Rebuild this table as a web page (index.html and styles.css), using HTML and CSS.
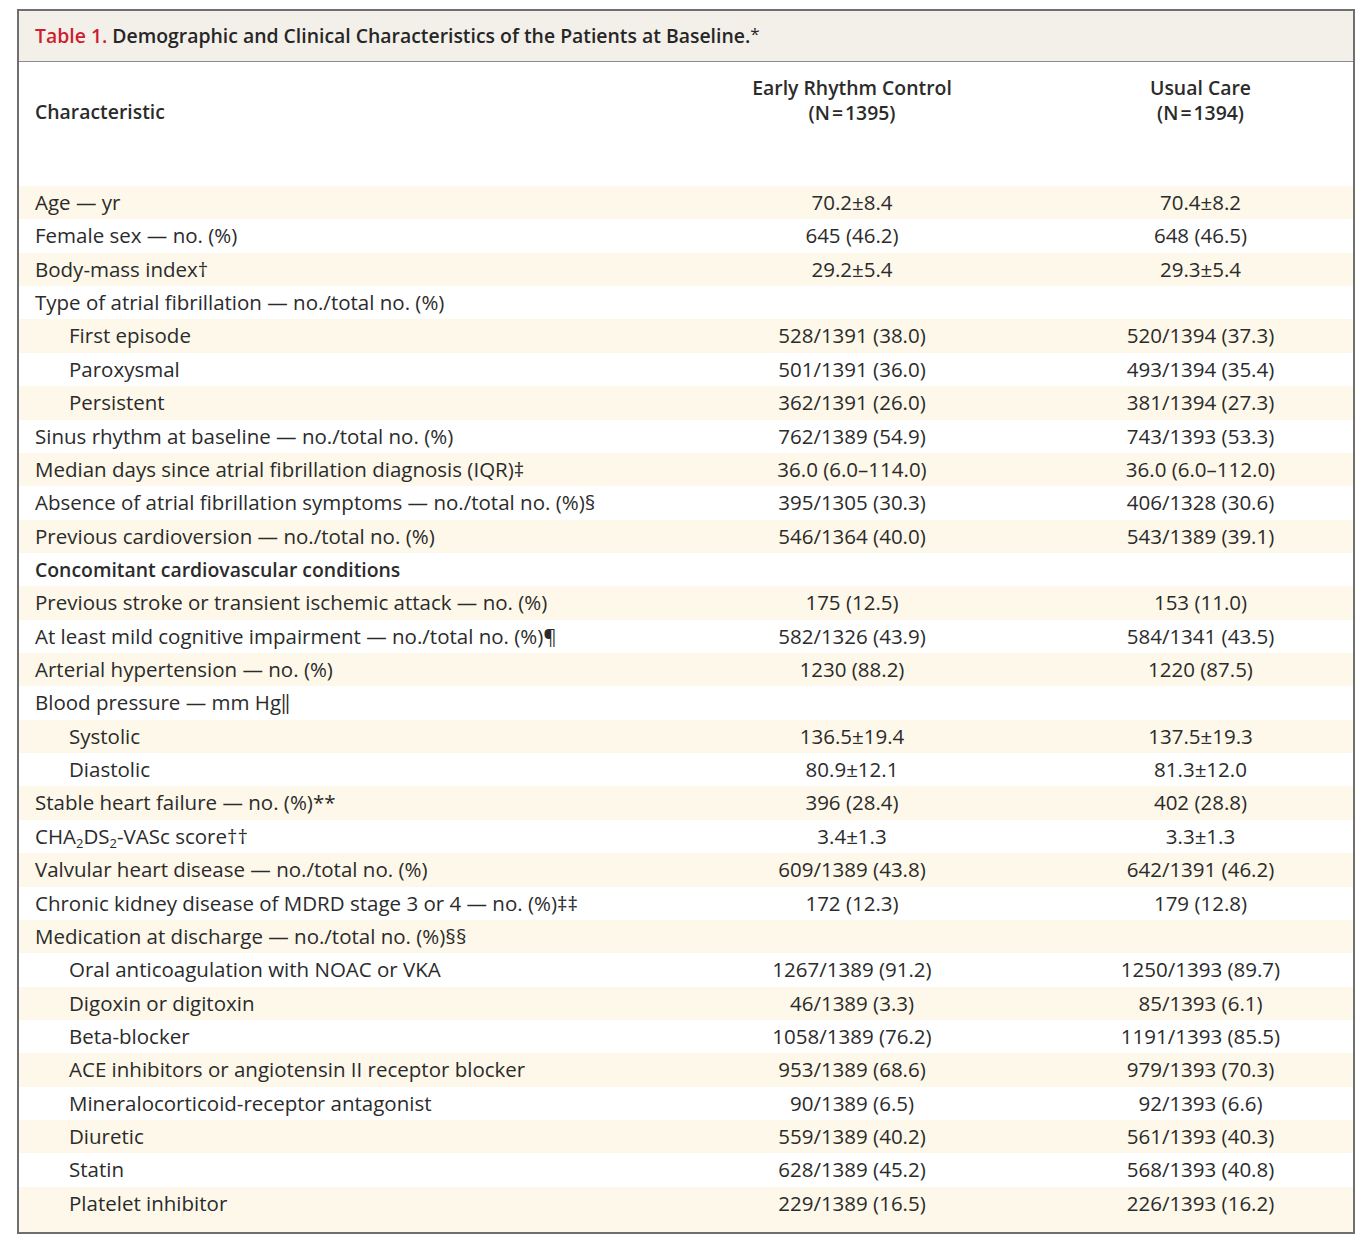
FILE: index.html
```html
<!DOCTYPE html>
<html lang="en">
<head>
<meta charset="utf-8">
<title>Table 1</title>
<link rel="stylesheet" href="styles.css">
</head>
<body>
<div class="table-box">
  <div class="title-bar"><span class="tnum">Table 1.</span> Demographic and Clinical Characteristics of the Patients at Baseline.<span class="fn">*</span></div>
  <div class="head">
    <div class="h-char">Characteristic</div>
    <div class="h-col">Early Rhythm Control<br>(N<span class="eq">=</span>1395)</div>
    <div class="h-col">Usual Care<br>(N<span class="eq">=</span>1394)</div>
  </div>
  <div class="rows">
    <div class="row s"><div class="c0">Age — yr</div><div class="c">70.2±8.4</div><div class="c">70.4±8.2</div></div>
    <div class="row"><div class="c0">Female sex — no. (%)</div><div class="c">645 (46.2)</div><div class="c">648 (46.5)</div></div>
    <div class="row s"><div class="c0">Body-mass index†</div><div class="c">29.2±5.4</div><div class="c">29.3±5.4</div></div>
    <div class="row"><div class="c0">Type of atrial fibrillation — no./total no. (%)</div><div class="c"></div><div class="c"></div></div>
    <div class="row s"><div class="c0 ind">First episode</div><div class="c">528/1391 (38.0)</div><div class="c">520/1394 (37.3)</div></div>
    <div class="row"><div class="c0 ind">Paroxysmal</div><div class="c">501/1391 (36.0)</div><div class="c">493/1394 (35.4)</div></div>
    <div class="row s"><div class="c0 ind">Persistent</div><div class="c">362/1391 (26.0)</div><div class="c">381/1394 (27.3)</div></div>
    <div class="row"><div class="c0">Sinus rhythm at baseline — no./total no. (%)</div><div class="c">762/1389 (54.9)</div><div class="c">743/1393 (53.3)</div></div>
    <div class="row s"><div class="c0">Median days since atrial fibrillation diagnosis (IQR)‡</div><div class="c">36.0 (6.0–114.0)</div><div class="c">36.0 (6.0–112.0)</div></div>
    <div class="row"><div class="c0">Absence of atrial fibrillation symptoms — no./total no. (%)§</div><div class="c">395/1305 (30.3)</div><div class="c">406/1328 (30.6)</div></div>
    <div class="row s"><div class="c0">Previous cardioversion — no./total no. (%)</div><div class="c">546/1364 (40.0)</div><div class="c">543/1389 (39.1)</div></div>
    <div class="row"><div class="c0 bold">Concomitant cardiovascular conditions</div><div class="c"></div><div class="c"></div></div>
    <div class="row s"><div class="c0">Previous stroke or transient ischemic attack — no. (%)</div><div class="c">175 (12.5)</div><div class="c">153 (11.0)</div></div>
    <div class="row"><div class="c0">At least mild cognitive impairment — no./total no. (%)¶</div><div class="c">582/1326 (43.9)</div><div class="c">584/1341 (43.5)</div></div>
    <div class="row s"><div class="c0">Arterial hypertension — no. (%)</div><div class="c">1230 (88.2)</div><div class="c">1220 (87.5)</div></div>
    <div class="row"><div class="c0">Blood pressure — mm Hg‖</div><div class="c"></div><div class="c"></div></div>
    <div class="row s"><div class="c0 ind">Systolic</div><div class="c">136.5±19.4</div><div class="c">137.5±19.3</div></div>
    <div class="row"><div class="c0 ind">Diastolic</div><div class="c">80.9±12.1</div><div class="c">81.3±12.0</div></div>
    <div class="row s"><div class="c0">Stable heart failure — no. (%)**</div><div class="c">396 (28.4)</div><div class="c">402 (28.8)</div></div>
    <div class="row"><div class="c0">CHA<sub>2</sub>DS<sub>2</sub>-VASc score††</div><div class="c">3.4±1.3</div><div class="c">3.3±1.3</div></div>
    <div class="row s"><div class="c0">Valvular heart disease — no./total no. (%)</div><div class="c">609/1389 (43.8)</div><div class="c">642/1391 (46.2)</div></div>
    <div class="row"><div class="c0">Chronic kidney disease of MDRD stage 3 or 4 — no. (%)‡‡</div><div class="c">172 (12.3)</div><div class="c">179 (12.8)</div></div>
    <div class="row s"><div class="c0">Medication at discharge — no./total no. (%)§§</div><div class="c"></div><div class="c"></div></div>
    <div class="row"><div class="c0 ind">Oral anticoagulation with NOAC or VKA</div><div class="c">1267/1389 (91.2)</div><div class="c">1250/1393 (89.7)</div></div>
    <div class="row s"><div class="c0 ind">Digoxin or digitoxin</div><div class="c">46/1389 (3.3)</div><div class="c">85/1393 (6.1)</div></div>
    <div class="row"><div class="c0 ind">Beta-blocker</div><div class="c">1058/1389 (76.2)</div><div class="c">1191/1393 (85.5)</div></div>
    <div class="row s"><div class="c0 ind">ACE inhibitors or angiotensin II receptor blocker</div><div class="c">953/1389 (68.6)</div><div class="c">979/1393 (70.3)</div></div>
    <div class="row"><div class="c0 ind">Mineralocorticoid-receptor antagonist</div><div class="c">90/1389 (6.5)</div><div class="c">92/1393 (6.6)</div></div>
    <div class="row s"><div class="c0 ind">Diuretic</div><div class="c">559/1389 (40.2)</div><div class="c">561/1393 (40.3)</div></div>
    <div class="row"><div class="c0 ind">Statin</div><div class="c">628/1389 (45.2)</div><div class="c">568/1393 (40.8)</div></div>
    <div class="row s last"><div class="c0 ind">Platelet inhibitor</div><div class="c">229/1389 (16.5)</div><div class="c">226/1393 (16.2)</div></div>
  </div>
</div>
</body>
</html>
```
FILE: styles.css
```css
html, body {
  margin: 0;
  padding: 0;
  background: #ffffff;
}
body {
  font-family: "Open Sans", Lato, "Liberation Sans", sans-serif;
  color: #2b2b2b;
  font-size: 20.5px;
}
.table-box {
  margin: 9px 0 0 17px;
  width: 1334px;
  border: 2px solid #6f6f6f;
}
.title-bar {
  height: 46px;
  line-height: 46px;
  padding-bottom: 4px;
  background: #f3f0ea;
  border-bottom: 1px solid #8c8c8c;
  padding-left: 16px;
  font-weight: 600;
  font-size: 19.4px;
  color: #262626;
  white-space: nowrap;
}
.tnum {
  color: #cc1f30;
}
.fn {
  font-size: 17px;
  vertical-align: 3px;
  font-weight: 400;
}
.head {
  display: grid;
  grid-template-columns: 637px 392px 305px;
  height: 124px;
  font-weight: 600;
  line-height: 25px;
  font-size: 19.4px;
}
.h-char {
  padding: 37px 0 0 16px;
}
.h-col {
  padding-top: 13px;
  text-align: center;
}
.eq {
  padding: 0 2px;
}
.rows {
  display: flex;
  flex-direction: column;
}
.row {
  display: grid;
  grid-template-columns: 637px 392px 305px;
  height: 33.37px;
  line-height: 33.37px;
  white-space: nowrap;
}
.row.s {
  background: #fdf8e9;
}
.row.last {
  height: 45px;
}
.c0 {
  padding-left: 16px;
}
.c0.ind {
  padding-left: 50px;
}
.c0.bold {
  font-weight: 600;
  font-size: 19.4px;
}
.c {
  text-align: center;
}
sub {
  font-size: 13px;
  line-height: 0;
  vertical-align: -4px;
}
```
